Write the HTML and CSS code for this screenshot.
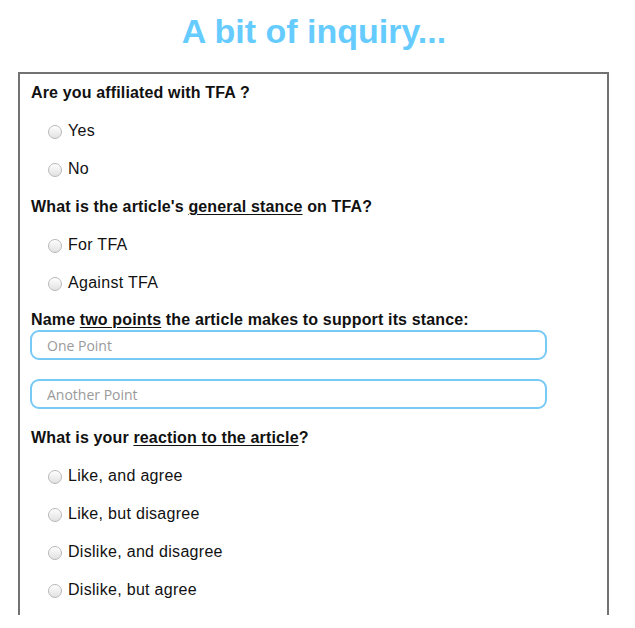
FILE: index.html
```html
<!DOCTYPE html>
<html>
<head>
<meta charset="utf-8">
<link rel="stylesheet" href="styles.css">
</head>
<body>
<h1 class="title">A bit of inquiry...</h1>
<form class="survey">
  <div class="question">Are you affiliated with TFA ?</div>
  <label class="option"><input type="radio" name="aff" class="radio"><span>Yes</span></label>
  <label class="option"><input type="radio" name="aff" class="radio"><span>No</span></label>

  <div class="question">What is the article's <u>general stance</u> on TFA?</div>
  <label class="option"><input type="radio" name="stance" class="radio"><span>For TFA</span></label>
  <label class="option"><input type="radio" name="stance" class="radio"><span>Against TFA</span></label>

  <div class="question question-tight">Name <u>two points</u> the article makes to support its stance:</div>
  <input type="text" class="field" placeholder="One Point">
  <input type="text" class="field field-second" placeholder="Another Point">

  <div class="question question-after-field">What is your <u>reaction to the article</u>?</div>
  <label class="option"><input type="radio" name="react" class="radio"><span>Like, and agree</span></label>
  <label class="option"><input type="radio" name="react" class="radio"><span>Like, but disagree</span></label>
  <label class="option"><input type="radio" name="react" class="radio"><span>Dislike, and disagree</span></label>
  <label class="option"><input type="radio" name="react" class="radio"><span>Dislike, but agree</span></label>
</form>
</body>
</html>
```

FILE: styles.css
```css
html, body {
  margin: 0;
  padding: 0;
  background: #ffffff;
}

body {
  font-family: "Liberation Sans", Arial, Helvetica, sans-serif;
  color: #111;
}

.title {
  margin: 0 0 21px 0;
  padding: 11px 7px 0 0;
  height: 40px;
  line-height: 40px;
  font-size: 34px;
  font-weight: bold;
  text-align: center;
  color: #66ccff;
}

.survey {
  margin-left: 18px;
  width: 587px;
  border: 2px solid #727272;
  border-bottom: none;
  padding: 0 0 6px 0;
  display: flex;
  flex-direction: column;
}

.question {
  font-size: 16px;
  font-weight: bold;
  line-height: 38px;
  height: 38px;
  padding-left: 11px;
  letter-spacing: 0.15px;
  white-space: nowrap;
}

.question u {
  text-decoration-thickness: 1px;
  text-underline-offset: 2px;
}

.question-tight {
  line-height: 20px;
  height: 20px;
  margin-top: 8px;
}

.question-after-field {
  margin-top: 10px;
}

.option {
  display: flex;
  align-items: center;
  height: 38px;
  padding-left: 28px;
  font-size: 16px;
  line-height: 38px;
  letter-spacing: 0.3px;
}

.radio {
  -webkit-appearance: none;
  appearance: none;
  margin: 0 6px 0 0;
  width: 14px;
  height: 14px;
  border-radius: 50%;
  border: 1px solid #b8b8b8;
  background: linear-gradient(#fdfdfd, #e2e2e2);
  box-shadow: inset 0 1px 1px rgba(255,255,255,0.8);
  flex: none;
  position: relative;
  top: 1px;
}

.field {
  display: block;
  box-sizing: border-box;
  margin: 0 0 0 10px;
  width: 517px;
  height: 30px;
  border: 2px solid #77c9f6;
  border-radius: 9px;
  padding: 0 0 0 15px;
  font-family: "Open Sans", "Lucida Grande", sans-serif;
  font-size: 14px;
  color: #333;
  outline: none;
  background: #fff;
}

.field::placeholder {
  color: #9a9a9a;
}

.field-second {
  margin-top: 19px;
}
```
